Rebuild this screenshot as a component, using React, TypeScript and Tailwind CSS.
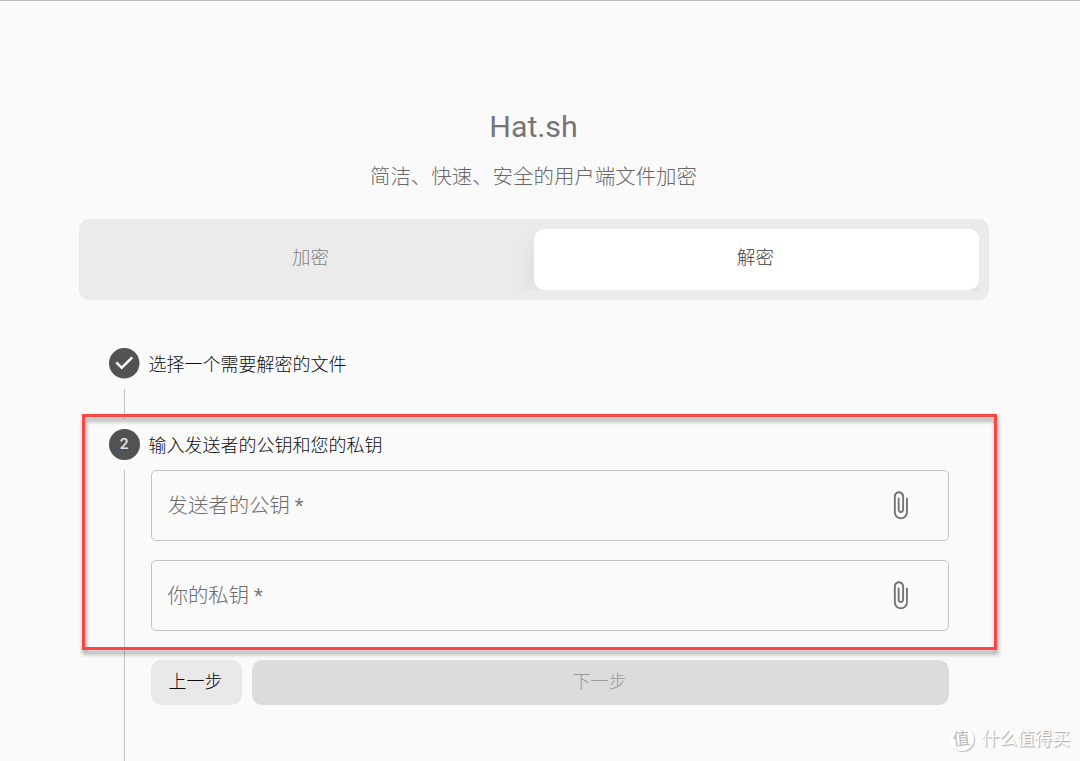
import React, { useState } from 'react';
import clsx from 'clsx';

const TABS = ['加密', '解密'];

const FIELDS = ['发送者的公钥', '你的私钥'];

function AttachIcon() {
  return (
    <svg viewBox="0 0 24 24" className="size-[30.5px] fill-[#757575]">
      <path d="M16.5 6v11.5c0 2.21-1.79 4-4 4s-4-1.79-4-4V5c0-1.38 1.12-2.5 2.5-2.5s2.5 1.12 2.5 2.5v10.5c0 .55-.45 1-1 1s-1-.45-1-1V6H10v9.5c0 1.38 1.12 2.5 2.5 2.5s2.5-1.12 2.5-2.5V5c0-2.21-1.79-4-4-4S7 2.79 7 5v12.5c0 3.04 2.46 5.5 5.5 5.5s5.5-2.46 5.5-5.5V6h-1.5z" />
    </svg>
  );
}

function CheckIcon() {
  return (
    <svg viewBox="0 0 24 24" className="size-[30.5px] fill-[#525252]">
      <path d="M12 0a12 12 0 1 0 0 24 12 12 0 0 0 0-24zm-2 17l-5-5 1.4-1.4 3.6 3.6 7.6-7.6L19 8l-9 9z" />
    </svg>
  );
}

function KeyField({ label }: { label: string }) {
  return (
    <div className="flex h-[71px] items-center justify-between rounded-[5px] border border-[#c4c4c4] pr-8 pl-4">
      <span className="pt-0.5 text-[20.4px] text-[#6c6c6c]">
        {label} <span className="font-normal text-[#7c7c7c]">*</span>
      </span>
      <AttachIcon />
    </div>
  );
}

export default function App() {
  const [tab, setTab] = useState(1);

  return (
    <div className="relative h-[761px] w-[1080px] overflow-hidden border-t border-[#b9b9b9] bg-[#fafafa] font-['Roboto','Noto_Sans_CJK_SC',sans-serif] font-light">
      <main className="ml-[79px] w-[910px] pt-[106px]">
        <h1 className="pr-px text-center text-[30.4px] leading-10 font-normal text-[#757575]">Hat.sh</h1>
        <p className="mt-[14px] pr-px text-center text-[20.45px] leading-8 text-[#686868]">
          简洁、快速、安全的用户端文件加密
        </p>

        <div className="mt-[26px] rounded-[10px] bg-[#ebebeb] p-[10px]">
          <div className="flex h-[61px] overflow-hidden">
            {TABS.map((name, idx) => (
              <button
                key={name}
                onClick={() => setTab(idx)}
                className={clsx(
                  'flex-1 rounded-[10px] pr-0.5 pb-px text-[18.5px]',
                  tab === idx
                    ? 'bg-white text-[#3c3c3c] shadow-[0_10px_30px_-3px_rgba(0,0,0,0.1)]'
                    : 'text-[#808080]'
                )}
              >
                {name}
              </button>
            ))}
          </div>
        </div>

        <div className="pt-[48px] pr-[40.5px] pl-[30px] text-[18px] text-[#0c0c0c]">
          <div className="flex h-[31px] items-center gap-[9px]">
            <CheckIcon />
            <span className="pt-px">选择一个需要解密的文件</span>
          </div>
          <div className="mt-[10px] ml-[15px] h-[30px] w-px bg-[#c4c4c4]" />

          <div className="mt-[10px] flex h-[31px] items-center gap-[9px]">
            <span className="flex size-[30.5px] items-center justify-center rounded-full bg-[#525252] text-[15.5px] font-medium text-[#e4e4e4]">
              2
            </span>
            <span className="pt-px">输入发送者的公钥和您的私钥</span>
          </div>
          <div className="mt-[10px] ml-[15px] h-[292px] border-l border-[#c4c4c4] pl-[25.5px]">
            <div className="flex flex-col gap-[19px]">
              {FIELDS.map((label) => (
                <KeyField key={label} label={label} />
              ))}
            </div>
            <div className="mt-[29px] flex h-[45px] gap-[10px]">
              <button className="w-[91px] rounded-[10px] bg-[#e9e9e9] pr-px pb-0.5">上一步</button>
              <button disabled className="flex-1 rounded-[10px] bg-[#dcdcdc] pr-px pb-0.5 text-[#9a9a9a]">
                下一步
              </button>
            </div>
          </div>
        </div>
      </main>

      {/* highlight around the key inputs */}
      <div className="pointer-events-none absolute top-[413px] left-[82px] h-[236px] w-[915px] border-3 border-[#ff4444] drop-shadow-[1px_4px_2px_rgba(0,0,0,0.4)]" />

      {/* watermark */}
      <div className="absolute right-[10px] bottom-[10px] flex items-center gap-[8px] font-normal text-white">
        <span className="flex size-6 items-center justify-center rounded-full bg-white text-[17px] leading-none text-[#b8b8b8] shadow-[1px_1px_1px_rgba(0,0,0,0.25)]">
          <span className="-rotate-6">值</span>
        </span>
        <span className="text-[17.7px] leading-6 [text-shadow:1px_1px_1px_rgba(0,0,0,0.35)]">什么值得买</span>
      </div>
    </div>
  );
}
